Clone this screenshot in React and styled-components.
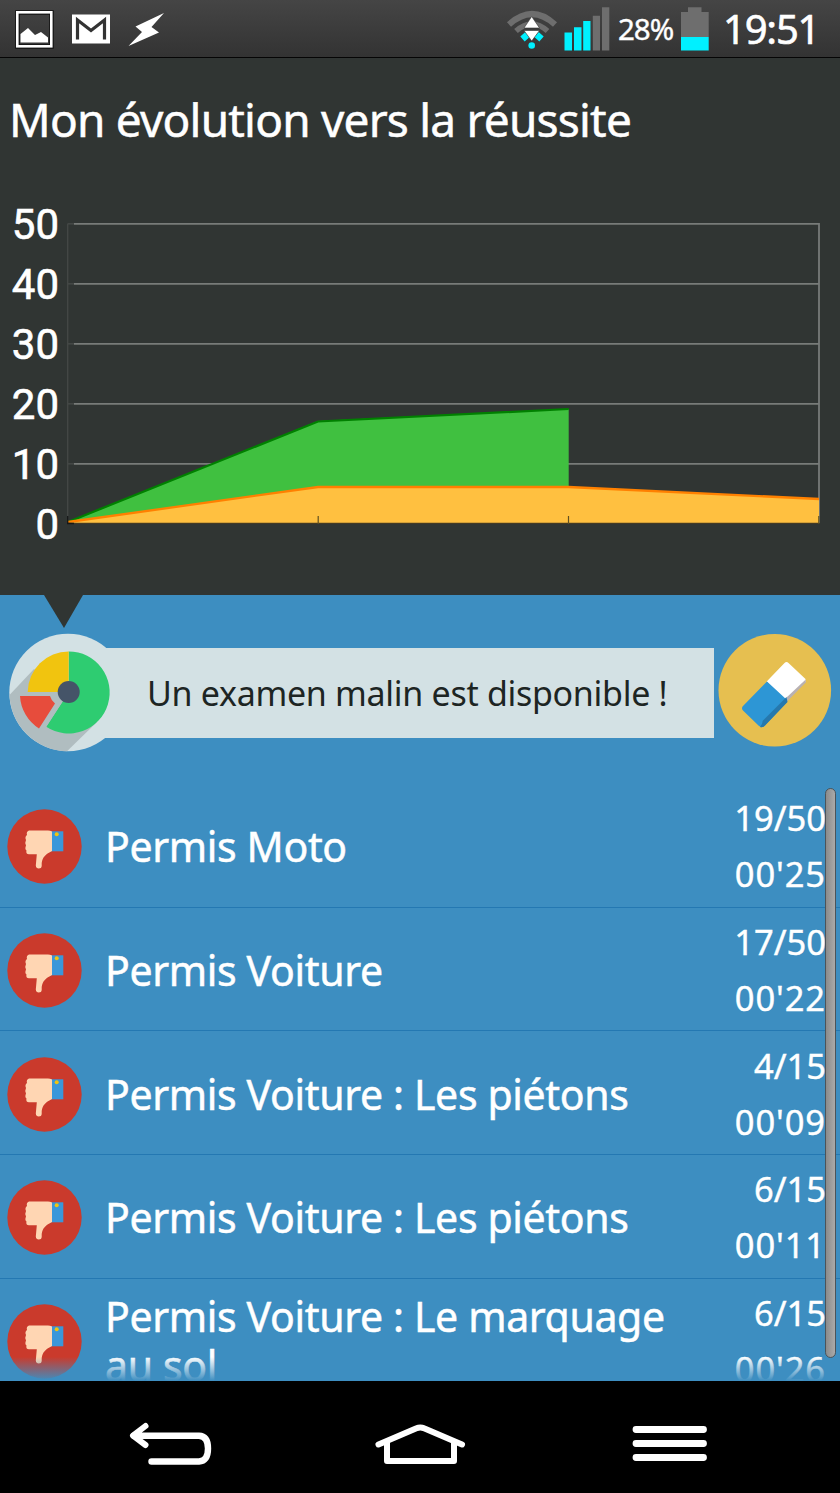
import React from "react";
import styled, { createGlobalStyle } from "styled-components";

const GlobalStyle = createGlobalStyle`
  html, body { margin: 0; padding: 0; background: #000; }
  *, *::before, *::after { box-sizing: border-box; }
  svg { display: block; flex: none; overflow: visible; }
`;

const Screen = styled.div`
  width: 840px;
  height: 1493px;
  display: flex;
  flex-direction: column;
  overflow: hidden;
  background: #000;
  color: #fff;
  font-family: "Noto Sans", "Open Sans", sans-serif;
`;

const StatusBar = styled.header`
  flex: none;
  height: 58px;
  padding: 0 21px 0 16px;
  display: flex;
  align-items: center;
  justify-content: space-between;
  background: linear-gradient(#454545, #333333);
  border-bottom: 1px solid #050505;
`;

const StatusGroup = styled.div`
  display: flex;
  align-items: center;
  gap: ${(p) => p.$gap}px;
`;

const BatteryText = styled.span`
  width: 56px;
  margin-left: 2px;
  font-size: 29.5px;
  line-height: 58px;
  letter-spacing: -1px;
  white-space: nowrap;
  -webkit-text-stroke: 0.4px #fff;
`;

const Clock = styled.span`
  width: 96px;
  margin-left: 8px;
  font-size: 40px;
  line-height: 58px;
  letter-spacing: -1.2px;
  white-space: nowrap;
  -webkit-text-stroke: 0.6px #fff;
`;

const ChartPanel = styled.section`
  flex: none;
  height: 537px;
  display: flex;
  flex-direction: column;
  background: #303533;
`;

const Title = styled.h1`
  margin: 0;
  padding: 30px 0 0 9px;
  height: 132px;
  font-size: 46px;
  font-weight: 400;
  line-height: 62px;
  letter-spacing: -0.8px;
  white-space: nowrap;
  -webkit-text-stroke: 0.5px #fff;
`;

const ChartLabel = styled.text`
  font-family: Roboto, sans-serif;
  font-size: 42px;
  fill: #fff;
  stroke: #fff;
  stroke-width: 0.6px;
  text-anchor: end;
`;

const ResultsPanel = styled.section`
  position: relative;
  flex: none;
  height: 786px;
  display: flex;
  flex-direction: column;
  overflow: hidden;
  background: #3d8ec1;
`;

const Pointer = styled.svg`
  margin-left: 44px;
`;

const Banner = styled.div`
  flex: none;
  height: 156px;
  display: flex;
  align-items: flex-start;
  padding-left: 9px;
`;

const PieIcon = styled.svg`
  position: relative;
  z-index: 1;
  margin-top: 6px;
`;

const BannerText = styled.div`
  width: 650px;
  height: 90px;
  margin: 20px 5px 0 -65px;
  padding-left: 83px;
  background: #d3e1e4;
  color: #1d2523;
  font-size: 34px;
  line-height: 91px;
  letter-spacing: -0.3px;
  white-space: nowrap;
`;

const EraserIcon = styled.svg`
  margin-top: 6px;
`;

const List = styled.div`
  display: flex;
  flex-direction: column;
`;

const Row = styled.div`
  flex: none;
  height: 123.67px;
  display: flex;
  align-items: center;
  padding: 3px 14px 0 7px;
  border-bottom: 1px solid #2478b2;
`;

const RowName = styled.div`
  flex: 1;
  padding-left: 23px;
  padding-right: 40px;
  font-size: 41px;
  line-height: 49px;
  letter-spacing: -0.35px;
  -webkit-text-stroke: 0.5px #fff;
`;

const Results = styled.div`
  display: flex;
  flex-direction: column;
  align-items: flex-end;
  margin-top: -1px;
  font-size: 34.5px;
  line-height: 56px;
  -webkit-text-stroke: 0.4px #fff;
`;

const Score = styled.span`
  letter-spacing: 0;
`;

const Time = styled.span`
  letter-spacing: 0.9px;
`;

const Fade = styled.div`
  position: absolute;
  left: 0;
  right: 0;
  bottom: 0;
  height: 24px;
  background: linear-gradient(rgba(61, 142, 193, 0), #3d8ec1);
`;

const Scrollbar = styled.div`
  position: absolute;
  top: 193px;
  right: 4px;
  width: 11px;
  height: 570px;
  border: 1.5px solid #4b545a;
  border-radius: 6px;
  background: linear-gradient(90deg, #8b8b8b, #aaaaaa);
`;

const NavBar = styled.nav`
  flex: none;
  height: 112px;
  display: flex;
  align-items: flex-start;
  gap: 163px;
  padding: 39px 0 0 129px;
  background: #000;
`;

const rows = [
  { name: "Permis Moto", score: "19/50", time: "00'25" },
  { name: "Permis Voiture", score: "17/50", time: "00'22" },
  { name: "Permis Voiture : Les piétons", score: "4/15", time: "00'09" },
  { name: "Permis Voiture : Les piétons", score: "6/15", time: "00'11" },
  { name: "Permis Voiture : Le marquage au sol", score: "6/15", time: "00'26" },
];

const levels = [50, 40, 30, 20, 10, 0];

const PictureIcon = () => (
  <svg width="38" height="38" viewBox="17 10 38 38">
    <rect x="18.5" y="12.5" width="34" height="34" fill="none" stroke="#111" strokeWidth="4.5" />
    <rect x="18.3" y="12.3" width="34" height="34" fill="none" stroke="#fff" strokeWidth="2.6" />
    <path d="M21.500 42.500V34L29 28L36 35L42 32L49 37.500V42.500Z" fill="#fff" />
  </svg>
);

const MailIcon = () => (
  <svg width="38" height="30" viewBox="73 14 38 30">
    <rect x="72" y="14.500" width="38" height="29" fill="#fff" />
    <path d="M77.500 39.500V20L91 30.500L104.500 20V39.500" fill="none" stroke="#333" strokeWidth="3.2" />
  </svg>
);

const BoltIcon = () => (
  <svg width="37" height="34" viewBox="131 12 37 34" style={{ filter: "blur(0.6px)" }}>
    <path d="M165 13L152.500 27L160 32.500L129.500 46L143 32L136.500 26.500Z" fill="#fff" />
  </svg>
);

const WifiIcon = () => (
  <svg width="50" height="42" viewBox="507 10 50 42">
    <path d="M509 26.500Q532 5.500 555 26.500" fill="none" stroke="#6e6e6e" strokeWidth="6" />
    <path d="M516 33Q532 19 547.500 33" fill="none" stroke="#6e6e6e" strokeWidth="5.500" />
    <path d="M522.500 41L527.500 36.500M536.500 36.500L541.500 41" stroke="#00f0ff" strokeWidth="6.500" />
    <circle cx="531.700" cy="47.500" r="3.300" fill="#00f0ff" />
    <path d="M531.700 18.500L539.500 30H524ZM524 32.500H539.500L531.700 43Z" fill="#fff" stroke="#333" strokeWidth=".6" />
  </svg>
);

const SignalIcon = () => (
  <svg width="46" height="44" viewBox="563 7 46 44">
    <path d="M563.500 32.500H571V50.500H563.500ZM573 27.300H580.500V50.500H573ZM582.200 21H589.500V50.500H582.200Z" fill="#00f0ff" />
    <path d="M591.800 15.700H599V50.500H591.800ZM601 7.300H608.300V50.500H601Z" fill="#6e6e6e" />
  </svg>
);

const BatteryIcon = () => (
  <svg width="28" height="44" viewBox="682 7 28 44">
    <path d="M682 12H689V7.300H702.500V12H709.700V37H682Z" fill="#6e6e6e" />
    <path d="M682 37H709.700V50.500H682Z" fill="#00f0ff" />
  </svg>
);

const Chart = () => (
  <svg width="840" height="405" viewBox="0 190 840 405">
    {levels.map((n) => (
      <ChartLabel key={n} x="59" y={538.5 - n * 6}>{n}</ChartLabel>
    ))}
    {levels.slice(0, 5).map((n) => (
      <React.Fragment key={n}>
        <path d={`M68 ${523.8 - n * 6}H74`} stroke="#454947" strokeWidth="1.5" />
        <path d={`M74 ${523.8 - n * 6}H819`} stroke="#777b79" strokeWidth="1.7" />
      </React.Fragment>
    ))}
    <path d="M67.700 223.500V523" stroke="#454947" strokeWidth="1.3" />
    <path d="M819 223V523" stroke="#777b79" strokeWidth="1.8" />
    <path d="M68 522.500L318 421L568.700 409V523H68Z" fill="#40c040" />
    <path d="M68 522L318 421.500L568.700 409" fill="none" stroke="#008000" strokeWidth="2.200" />
    <path d="M68 522.500L318 487H568.500L819 499V523H68Z" fill="#ffc040" />
    <path d="M68 522L318 487H568.500L819 499" fill="none" stroke="#ff8000" strokeWidth="2.300" />
    <path d="M68 523.300H819" stroke="#4b3c20" strokeWidth="1.100" />
    <path d="M67.700 516V523.500H74" fill="none" stroke="#151817" strokeWidth="1.300" />
    <path d="M318.200 516V524M568.500 516V524M818.800 516V524" stroke="#61501f" strokeWidth="1.200" />
  </svg>
);

const ThumbDown = () => (
  <svg width="75" height="75" viewBox="0 0 75 75">
    <circle cx="37.500" cy="37.500" r="37.200" fill="#ca3a2c" />
    <rect x="44" y="22.300" width="12.300" height="20" fill="#3a97da" />
    <circle cx="49.700" cy="25.300" r="2" fill="#f1c40f" />
    <path
      d="M22 21.500H41Q43 21.500 45 22.500V42C39 45 35.500 48 34.700 54V57Q34.500 59.500 31.800 59.500Q29 59.500 28.800 56.500L29.800 45.300H22Q18.500 45 19.500 41.500Q17.500 40 19 36.500Q17.500 34 19 31Q17.500 28 20 26Q19 22.500 22 21.500Z"
      fill="#ffd6b3"
    />
  </svg>
);

export default function App() {
  return (
    <>
      <GlobalStyle />
      <Screen>
        <StatusBar>
          <StatusGroup $gap={19}>
            <PictureIcon />
            <MailIcon />
            <BoltIcon />
          </StatusGroup>
          <StatusGroup $gap={6.5}>
            <WifiIcon />
            <SignalIcon />
            <BatteryText>28%</BatteryText>
            <BatteryIcon />
            <Clock>19:51</Clock>
          </StatusGroup>
        </StatusBar>

        <ChartPanel>
          <Title>Mon évolution vers la réussite</Title>
          <Chart />
        </ChartPanel>

        <ResultsPanel>
          <Pointer width="39" height="33" viewBox="0 0 39 33">
            <path d="M0 0H39L20 33Z" fill="#303533" />
          </Pointer>
          <Banner>
            <PieIcon width="120" height="118" viewBox="9 634 120 118">
              <circle cx="68" cy="692.500" r="58.700" fill="#d3e1e4" />
              <path d="M9.500 695L34 669L97 722L67 751.200A58.700 58.700 0 0 1 9.500 695Z" fill="#b0bdc0" />
              <path d="M68.700 692.500V651.500A41 41 0 1 1 46.200 726.800Z" fill="#2ecc71" />
              <path d="M68.700 692H27.700A41 41 0 0 1 68.700 651.500Z" fill="#f1c40f" />
              <path d="M27.700 692H60L66 696L46.200 727L39 729L20 696Z" fill="#b0bdc0" />
              <path d="M20 696H50Q51 700 55 703.500L39 728.500A41 41 0 0 1 20 696Z" fill="#e74c3c" />
              <circle cx="68.700" cy="692" r="11" fill="#455468" />
            </PieIcon>
            <BannerText>Un examen malin est disponible !</BannerText>
            <EraserIcon width="113" height="113" viewBox="719 634.500 113 113">
              <circle cx="774.800" cy="690.800" r="56.300" fill="#e6bf50" />
              <path d="M766.700 682L784.500 663.500Q786.500 661.500 788.500 663.500L805.500 679.500V682L786 702Z" fill="#fff" />
              <path d="M805.700 680V683L786.500 702.500V698Z" fill="#b8b1b2" />
              <path d="M767 682L743 706.500Q741 708.500 743 711L759 726.500Q762 729 765 726L787 702.500V700.500Z" fill="#2d96d5" />
              <path d="M786.500 697.500L787.500 702.500L765 726Q762.500 728.500 760 727.500Q763 724 762.500 721.500Z" fill="#2678ad" />
            </EraserIcon>
          </Banner>

          <List>
            {rows.map((row, i) => (
              <Row key={i}>
                <ThumbDown />
                <RowName>{row.name}</RowName>
                <Results>
                  <Score>{row.score}</Score>
                  <Time>{row.time}</Time>
                </Results>
              </Row>
            ))}
          </List>
          <Fade />
          <Scrollbar />
        </ResultsPanel>

        <NavBar>
          <svg width="84" height="48" viewBox="129 1420 84 48" fill="none" stroke="#fff" strokeLinecap="round" strokeLinejoin="round">
            <path d="M145.500 1426L133 1435.700L145.500 1445" strokeWidth="6" />
            <path d="M134 1435.700H199Q208 1436 208 1448.500Q208 1461 199 1461.500H151.500" strokeWidth="6.400" />
            <path d="M133 1435.700L142 1431V1440.500Z" fill="#fff" stroke="none" />
          </svg>
          <svg width="94" height="48" viewBox="376 1420 94 48" fill="none" stroke="#fff" strokeLinecap="round" strokeLinejoin="round">
            <path d="M378.500 1444.500L416.500 1428.300Q420.300 1426.500 424 1428.300L462 1444.500" strokeWidth="6" />
            <path d="M387 1443V1461H454V1443" strokeWidth="6" />
          </svg>
          <svg width="75" height="48" viewBox="633 1420 75 48" stroke="#fff" strokeLinecap="round" strokeWidth="6.800">
            <path d="M636 1429.500H703.500M636 1443.500H703.500M636 1457.500H703.500" />
          </svg>
        </NavBar>
      </Screen>
    </>
  );
}
